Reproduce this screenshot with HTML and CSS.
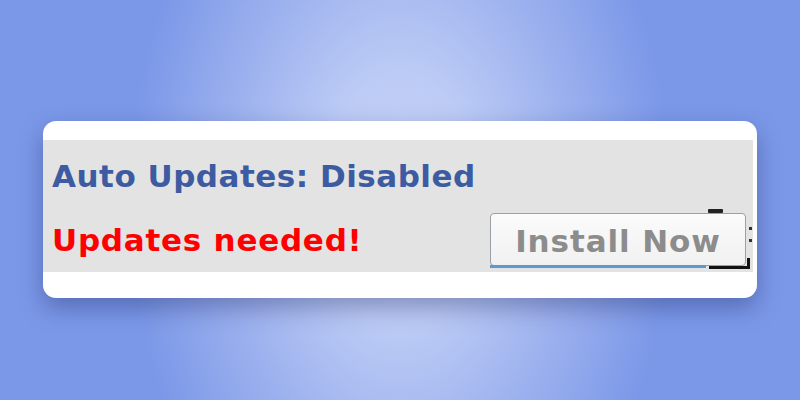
FILE: index.html
```html
<!DOCTYPE html>
<html>
<head>
<meta charset="utf-8">
<link rel="stylesheet" href="styles.css">
</head>
<body>
<div class="stage">
  <div class="card">
    <div class="panel">
      <div class="status">Auto Updates: Disabled</div>
      <div class="row">
        <div class="needed">Updates needed!</div>
        <div class="btn-wrap">
          <span class="mark-top"></span>
          <span class="dots"></span>
          <span class="underline"></span>
          <span class="bracket"></span>
          <div class="install">Install Now</div>
        </div>
      </div>
    </div>
  </div>
</div>
</body>
</html>
```
FILE: styles.css
```css
html, body {
  margin: 0;
  padding: 0;
}
body {
  width: 800px;
  height: 400px;
  overflow: hidden;
  font-family: "DejaVu Sans", Verdana, sans-serif;
}
.stage {
  width: 800px;
  height: 400px;
  box-sizing: border-box;
  padding-top: 121px;
  display: flex;
  justify-content: center;
  align-items: flex-start;
  background: radial-gradient(ellipse 270px 420px at 50% 50%, #c7d4f7 0%, #bccbf5 30%, #9bb0ee 65%, #7b98e8 100%);
}
.card {
  width: 714px;
  height: 177px;
  box-sizing: border-box;
  padding: 19px 4px 0 0;
  background: #ffffff;
  border-radius: 13px;
  box-shadow: 0 10px 24px rgba(20, 30, 90, 0.35);
}
.panel {
  height: 132px;
  box-sizing: border-box;
  background: #e3e3e3;
  padding: 18px 0 0 9px;
  display: flex;
  flex-direction: column;
}
.status {
  font-weight: bold;
  font-size: 31px;
  line-height: 36px;
  letter-spacing: 0.5px;
  color: #3c5ba2;
}
.row {
  display: flex;
  align-items: flex-start;
  justify-content: space-between;
  margin-top: 19px;
}
.needed {
  font-weight: bold;
  font-size: 31px;
  line-height: 36px;
  letter-spacing: 0.75px;
  color: #ff0000;
  margin-top: 9px;
}
.btn-wrap {
  position: relative;
  flex: 0 0 256px;
  margin-right: 7px;
  height: 55px;
}
.install {
  width: 256px;
  height: 53px;
  box-sizing: border-box;
  border: 1px solid #9aa0a8;
  border-radius: 4px;
  background: linear-gradient(#fbfbfb, #f1f1f1);
  font-weight: bold;
  font-size: 31px;
  line-height: 48px;
  padding-top: 3px;
  letter-spacing: 0.9px;
  color: #8c8c8c;
  text-align: center;
}
.underline {
  position: absolute;
  left: 0;
  top: 52px;
  width: 216px;
  height: 3px;
  background: #5a9ad0;
}
.bracket {
  position: absolute;
  left: 219px;
  top: 45px;
  width: 41px;
  height: 11px;
  border-right: 3px solid #111;
  border-bottom: 3px solid #111;
  box-sizing: border-box;
}
.mark-top {
  position: absolute;
  left: 218px;
  top: -4px;
  width: 15px;
  height: 4px;
  background: #222;
  border-radius: 1px;
}
.dots {
  position: absolute;
  left: 259px;
  top: 14px;
  width: 3px;
  height: 3px;
  background: #333;
  box-shadow: 0 12px 0 #333;
}
```
